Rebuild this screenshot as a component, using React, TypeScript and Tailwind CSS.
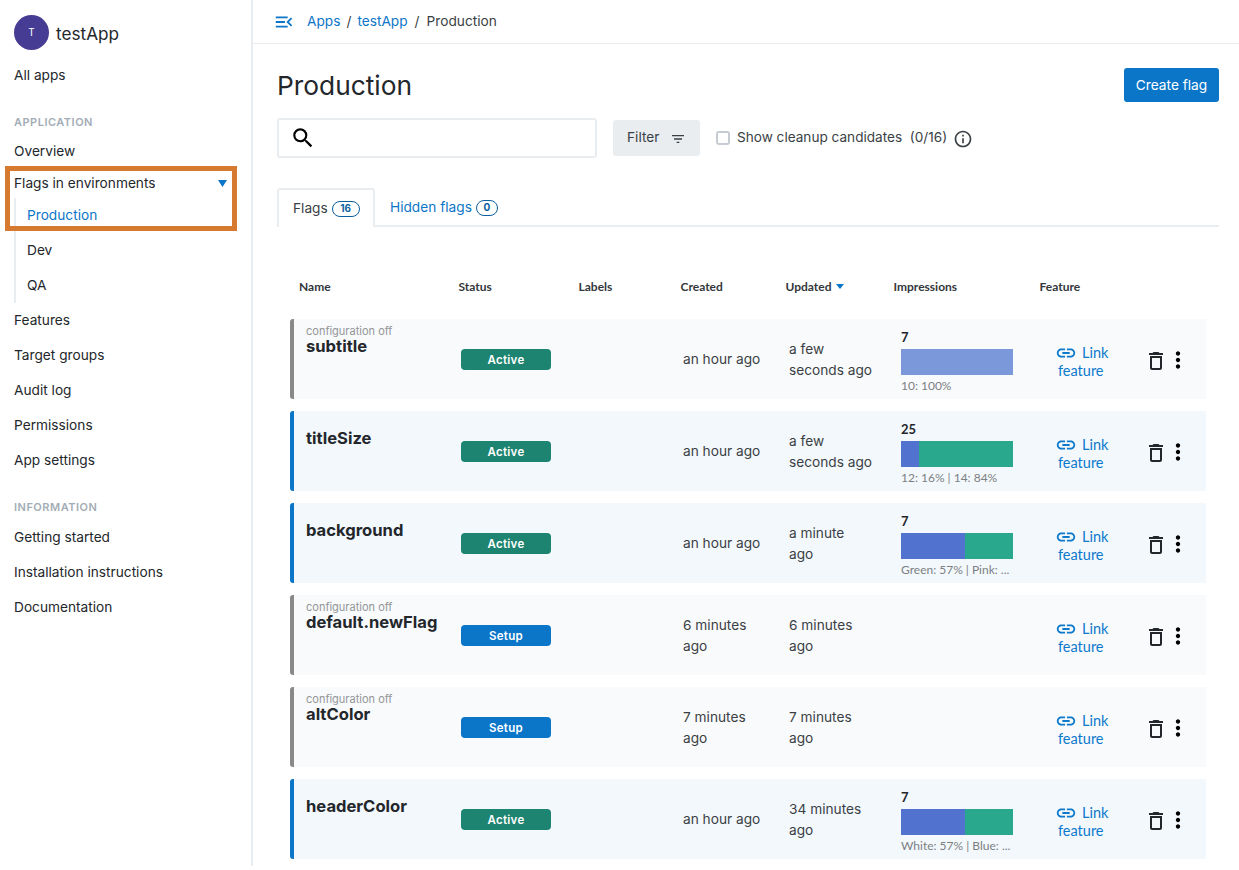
import { MdFilterList, MdInfoOutline, MdLink, MdMenuOpen, MdMoreVert, MdOutlineDelete, MdSearch } from 'react-icons/md'

type Flag = {
  name: string
  off?: boolean
  status: 'Active' | 'Setup'
  created: string[]
  updated: string[]
  count?: number
  bars?: { color: string; width: number }[]
  label?: string
}

const flags: Flag[] = [
  { name: 'subtitle', off: true, status: 'Active', created: ['an hour ago'], updated: ['a few', 'seconds ago'], count: 7, bars: [{ color: 'bg-[#7b98da]', width: 112 }], label: '10: 100%' },
  { name: 'titleSize', status: 'Active', created: ['an hour ago'], updated: ['a few', 'seconds ago'], count: 25, bars: [{ color: 'bg-[#5173cf]', width: 18 }, { color: 'bg-[#29a88e]', width: 94 }], label: '12: 16% | 14: 84%' },
  { name: 'background', status: 'Active', created: ['an hour ago'], updated: ['a minute', 'ago'], count: 7, bars: [{ color: 'bg-[#5173cf]', width: 64 }, { color: 'bg-[#29a88e]', width: 48 }], label: 'Green: 57% | Pink: ...' },
  { name: 'default.newFlag', off: true, status: 'Setup', created: ['6 minutes', 'ago'], updated: ['6 minutes', 'ago'] },
  { name: 'altColor', off: true, status: 'Setup', created: ['7 minutes', 'ago'], updated: ['7 minutes', 'ago'] },
  { name: 'headerColor', status: 'Active', created: ['an hour ago'], updated: ['34 minutes', 'ago'], count: 7, bars: [{ color: 'bg-[#5173cf]', width: 64 }, { color: 'bg-[#29a88e]', width: 48 }], label: 'White: 57% | Blue: ...' },
]

const gridCols = 'grid grid-cols-[165px_120px_102px_105px_108px_146px_1fr]'

function NavItem({ label, active, indent }: { label: string; active?: boolean; indent?: boolean }) {
  return (
    <div className={`h-[35px] flex items-center text-[13.7px] ${indent ? 'pl-[11px]' : ''} ${active ? 'text-[#0b76c8]' : 'text-[#23272b]'}`}>
      {label}
    </div>
  )
}

function Sidebar() {
  return (
    <aside className="relative w-[253px] shrink-0 border-r-2 border-[#e9edf0] pl-[14px] pr-[24px]">
      <div className="flex items-center gap-[7px] pt-[15px]">
        <div className="w-[35px] h-[35px] rounded-full bg-[#463c93] text-white text-[10px] flex items-center justify-center">T</div>
        <span className="pt-[3px] text-[17.2px] text-[#23272b]">testApp</span>
      </div>
      <div className="mt-[8px] h-[35px] flex items-center text-[13.7px] text-[#23272b]">All apps</div>
      <div className="mt-[21px] h-[16px] flex items-center text-[11px] font-semibold tracking-[0.5px] text-[#a3adb6]">APPLICATION</div>
      <div className="mt-[4px]">
        <NavItem label="Overview" />
      </div>
      <div className="-mt-[3px] h-[35px] flex items-center justify-between text-[13.7px] text-[#23272b]">
        <span>Flags in environments</span>
        <svg width="9" height="7" viewBox="0 0 9 7">
          <path d="M0 0h9L4.5 7z" fill="#0b76c8" />
        </svg>
      </div>
      <div className="-mt-[3px] border-l-2 border-[#e9edf0]">
        <NavItem label="Production" indent active />
        <NavItem label="Dev" indent />
        <NavItem label="QA" indent />
      </div>
      <NavItem label="Features" />
      <NavItem label="Target groups" />
      <NavItem label="Audit log" />
      <NavItem label="Permissions" />
      <NavItem label="App settings" />
      <div className="mt-[21px] h-[16px] flex items-center text-[11px] font-semibold tracking-[0.5px] text-[#a3adb6]">INFORMATION</div>
      <div className="mt-[5px]">
        <NavItem label="Getting started" />
        <NavItem label="Installation instructions" />
        <NavItem label="Documentation" />
      </div>
      {/* Highlight drawn over the screenshot */}
      <div className="absolute left-[5px] top-[166px] w-[232px] h-[65px] border-[5px] border-[#d67a2f] pointer-events-none" />
    </aside>
  )
}

function FlagRow({ flag }: { flag: Flag }) {
  const bg = flag.off ? 'bg-[#f9fafc] border-[#898989]' : 'bg-[#f3f8fd] border-[#0b76c8]'
  const badge = flag.status === 'Active' ? 'bg-[#1c8470]' : 'bg-[#0b76c8]'
  return (
    <div className={`${gridCols} h-[80px] border-l-4 rounded-l-[3px] ${bg}`}>
      <div className="pl-[12px] pt-[6px]">
        <div className="h-[12px] text-[11px] leading-[12px] text-[#939699] whitespace-nowrap">{flag.off ? 'configuration off' : ''}</div>
        <div className="text-[16.6px] leading-[18px] font-bold text-[#23272b] whitespace-nowrap">{flag.name}</div>
      </div>
      <div className="pl-[2px] pt-[30px]">
        <div className={`w-[90px] h-[21px] pt-[2px] rounded-[4px] text-white text-[11.5px] tracking-[0.3px] font-semibold flex items-center justify-center ${badge}`}>{flag.status}</div>
      </div>
      <div />
      <div className="pl-[2px] pt-[1px] flex flex-col justify-center text-[13.7px] leading-[21px] text-[#3a3f44]">
        {flag.created.map((line) => <div key={line}>{line}</div>)}
      </div>
      <div className="pl-[3px] pt-[1px] flex flex-col justify-center text-[13.7px] leading-[21px] text-[#3a3f44]">
        {flag.updated.map((line) => <div key={line}>{line}</div>)}
      </div>
      <div className="pl-[7px] font-['Lato',sans-serif]">
        {flag.bars && (
          <>
            <div className="pt-[10px] h-[30px] text-[13px] leading-[16px] font-bold text-[#23272b]">{flag.count}</div>
            <div className="flex h-[26px] w-[112px]">
              {flag.bars.map((bar) => (
                <div key={bar.color} className={`h-full ${bar.color}`} style={{ width: bar.width }} />
              ))}
            </div>
            <div className="mt-[3px] text-[12px] leading-[15px] text-[#7c7f82] whitespace-nowrap">{flag.label}</div>
          </>
        )}
      </div>
      <div className="pl-[15px] flex font-['Lato',sans-serif]">
        <div className="w-[60px] pt-[25px] text-[14.5px] leading-[18px] text-[#0d79cc]">
          <div className="flex items-center gap-[5px]">
            <MdLink size={22} className="my-[-2px]" />
            <span>Link</span>
          </div>
          <div className="pl-[3px]">feature</div>
        </div>
        <div className="ml-[29px] pt-[30px] flex text-[#23272b]">
          <MdOutlineDelete size={24} />
          <MdMoreVert size={26} className="ml-[-3px] mt-[-2px] text-black" />
        </div>
      </div>
    </div>
  )
}

function Main() {
  return (
    <main className="flex-1 min-w-0">
      <header className="h-[44px] border-b border-[#e9edf0] pl-[20px] flex items-center text-[13.7px]">
        <MdMenuOpen size={22} className="text-[#0b76c8]" />
        <span className="ml-[12px] text-[#0b76c8]">Apps</span>
        <span className="mx-[6px] text-[#3a3f44]">/</span>
        <span className="text-[#0b76c8]">testApp</span>
        <span className="mx-[7px] text-[#3a3f44]">/</span>
        <span className="text-[#3a3f44]">Production</span>
      </header>
      <div className="pl-[24px] pr-[20px]">
        <div className="flex items-start justify-between pt-[24px]">
          <h1 className="text-[26.3px] leading-[36px] font-normal text-[#23272b]">Production</h1>
          <button className="w-[95px] h-[34px] rounded-[3px] bg-[#0b76c8] text-white text-[13.7px]">Create flag</button>
        </div>
        <div className="flex items-center mt-[14px]">
          <div className="w-[320px] h-[40px] rounded-[3px] border-2 border-[#e9edf0] flex items-center pl-[11px]">
            <MdSearch size={26} className="text-black" />
          </div>
          <button className="ml-[16px] w-[87px] h-[36px] rounded-[3px] bg-[#e9edf0] pb-[2px] text-[13.7px] text-[#3a3f44] flex items-center pl-[14px] gap-[11px]">
            Filter
            <MdFilterList size={16} className="mt-[3px]" />
          </button>
          <div className="ml-[16px] w-[14px] h-[14px] rounded-[3px] border-2 border-[#c6ccd2] bg-white" />
          <span className="ml-[7px] mb-[2px] text-[13.6px] text-[#3a3f44] whitespace-pre">Show cleanup candidates  (0/16)</span>
          <MdInfoOutline size={20} className="ml-[6px] mt-[2px] text-[#3a3f44]" />
        </div>
        <div className="mt-[30px] flex border-b-2 border-[#e9edf0] h-[39px] text-[13.7px]">
          <div className="w-[98px] h-[39px] border-2 border-b-0 border-[#e9edf0] rounded-t-[3px] bg-white flex items-center pl-[14px] gap-[4px] text-[#3a3f44]">
            Flags
            <span className="w-[28px] h-[16px] rounded-full border border-[#0b5f9f] text-[10px] font-bold text-[#0b5f9f] flex items-center justify-center">16</span>
          </div>
          <div className="pl-[15px] flex items-center gap-[4px] text-[#0b76c8] h-[39px]">
            Hidden flags
            <span className="w-[22px] h-[16px] rounded-full border border-[#0b5f9f] text-[10px] font-bold text-[#0b5f9f] flex items-center justify-center">0</span>
          </div>
        </div>
        <div className="ml-[13px] w-[916px]">
          <div className={`${gridCols} pl-[3.5px] mt-[50px] h-[19px] items-center text-[12px] font-bold text-[#33373b] font-['Lato',sans-serif]`}>
            <div className="pl-[5.5px]">Name</div>
            <div>Status</div>
            <div>Labels</div>
            <div>Created</div>
            <div className="flex items-center gap-[5px]">
              Updated
              <svg width="8" height="5" viewBox="0 0 8 5"><path d="M0 0h8L4 5z" fill="#0b76c8" /></svg>
            </div>
            <div>Impressions</div>
            <div>Feature</div>
          </div>
          <div className="mt-[23px] flex flex-col gap-[12px]">
            {flags.map((flag) => <FlagRow key={flag.name} flag={flag} />)}
          </div>
        </div>
      </div>
    </main>
  )
}

export default function App() {
  return (
    <div className="flex h-[866px] w-[1239px] overflow-hidden bg-white font-['Inter',sans-serif]">
      <Sidebar />
      <Main />
    </div>
  )
}
